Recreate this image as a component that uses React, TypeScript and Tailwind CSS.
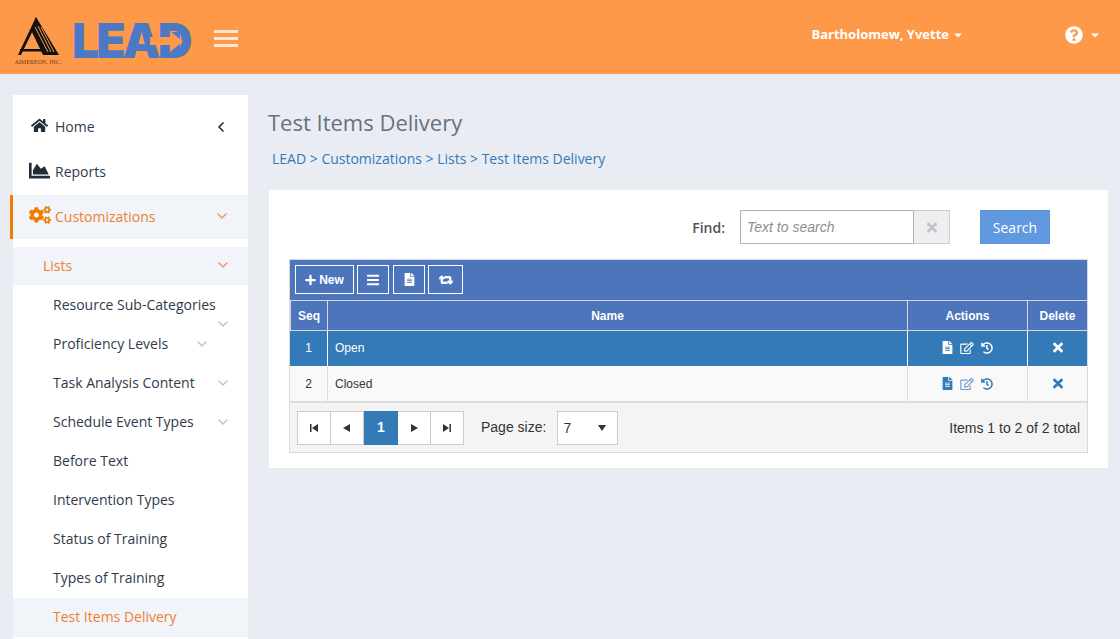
import { FaHome, FaChartArea, FaCogs, FaPlus, FaBars, FaFileAlt, FaRetweet, FaTimes, FaRegEdit, FaHistory, FaQuestionCircle } from "react-icons/fa"
import { ChevronDown, ChevronLeft } from "lucide-react"

const subItems = [
  { label: "Resource Sub-Categories" },
  { label: "Proficiency Levels", chevron: "near" },
  { label: "Task Analysis Content", chevron: "far" },
  { label: "Schedule Event Types", chevron: "far" },
  { label: "Before Text" },
  { label: "Intervention Types" },
  { label: "Status of Training" },
  { label: "Types of Training" },
]

function Tri({ d, w = 8, className = "" }: { d: string; w?: number; className?: string }) {
  return (
    <svg width={w} height="8" viewBox={`0 0 ${w} 8`} className={className}>
      <path d={d} fill="currentColor" />
    </svg>
  )
}

function Logo() {
  return (
    <div className="flex items-start">
      <div className="flex flex-col items-center w-[50px] mt-[16px] ml-[13px]">
        <svg width="46" height="40" viewBox="0 0 46 40">
          <path d="M21 1 L44 39 L28 39 L16 14 Z" fill="#111" />
          <path d="M21 1 L3 39 L6 39 L21 8 Z" fill="#111" />
          <path d="M20 11 L33 36 M23 10 L36 36 M26 11 L39 36" stroke="#ff994a" strokeWidth="1" fill="none" />
          <path d="M5 33 H27 V35.5 H5 Z" fill="#111" />
        </svg>
        <span className="text-[6px] leading-[6px] mt-[3px] text-[#6b3a16] whitespace-nowrap font-['Liberation_Serif',serif]">AIMEREON, INC.</span>
      </div>
      <div className="relative ml-[9px] mt-[17px] h-[48px] w-[122px]">
        <span className="block text-[48px] leading-[48px] font-black tracking-[-3px] text-[#4c78c4] font-['Inter',sans-serif]">LEAD</span>
        <svg className="absolute left-[78px] top-[14px]" width="36" height="22" viewBox="0 0 36 22">
          <path d="M18 1 H30 V20 H18 Z" fill="#4c78c4" />
          <path d="M0 6 H20 V0 L33 10.5 L20 21 V14 H0 Z" fill="#ff994a" />
        </svg>
      </div>
    </div>
  )
}

export default function App() {
  return (
    <div className="h-[639px] w-[1120px] overflow-hidden bg-[#e9ecf3] font-['Open_Sans',sans-serif]">
      {/* Header */}
      <div className="h-[74px] bg-[#ff994a] flex items-start relative">
        <Logo />
        <div className="ml-[20px] mt-[30px] flex flex-col gap-[4px] w-[24px]">
          <div className="h-[3px] bg-[#ffe6d2]" />
          <div className="h-[3px] bg-[#ffe6d2]" />
          <div className="h-[3px] bg-[#ffe6d2]" />
        </div>
        <div className="ml-auto mt-[26px] flex items-center text-white text-[13px] font-bold h-[18px]">
          <span>Bartholomew, Yvette</span>
          <Tri d="M0 2.5 H8 L4 6.5 Z" className="ml-[5px]" />
          <FaQuestionCircle className="ml-[103px] w-[18px] h-[18px]" />
          <Tri d="M0 2.5 H8 L4 6.5 Z" className="ml-[8px] mr-[21px]" />
        </div>
      </div>

      <div className="flex items-start">
        {/* Sidebar */}
        <div className="ml-[13px] mt-[21px] w-[235px] h-[560px] bg-white text-[14px] text-[#2f3b4c] shrink-0">
          <div className="h-[10px]" />
          <div className="h-[45px] pb-[2px] flex items-center relative">
            <FaHome className="ml-[18px] w-[17px] h-[17px] text-[#222d3a] -mt-[3px]" />
            <span className="ml-[7px]">Home</span>
            <ChevronLeft className="ml-auto mr-[19px] w-[16px] h-[16px] text-[#222d3a]" strokeWidth={2.5} />
          </div>
          <div className="h-[45px] pb-[2px] flex items-center">
            <FaChartArea className="ml-[16px] w-[21px] h-[21px] text-[#222d3a] -mt-[3px]" />
            <span className="ml-[5px]">Reports</span>
          </div>
          <div className="h-[44px] pb-[2px] flex items-center bg-[#f1f4f8] relative text-[#f0802f]">
            <div className="absolute -left-[3px] top-0 bottom-0 w-[3px] bg-[#ee7d00]" />
            <FaCogs className="ml-[16px] w-[22px] h-[22px] text-[#ee7d00] -mt-[2px]" />
            <span className="ml-[4px]">Customizations</span>
            <ChevronDown className="ml-auto mr-[18px] w-[16px] h-[16px] text-[#f0906a]" strokeWidth={2} />
          </div>
          <div className="h-[8px]" />
          <div className="h-[38px] pb-[2px] flex items-center bg-[#f1f4f8] text-[#f0802f]">
            <span className="ml-[30px]">Lists</span>
            <ChevronDown className="ml-auto mr-[17px] w-[16px] h-[16px] text-[#f0906a]" strokeWidth={2} />
          </div>
          <div className="h-[1px]" />
          {subItems.map((item) => (
            <div key={item.label} className="h-[39px] pb-[2px] flex items-center relative pl-[40px]">
              <span>{item.label}</span>
              {item.label === "Resource Sub-Categories" && (
                <ChevronDown className="absolute right-[17px] top-[30px] w-[16px] h-[16px] text-[#b8c2d0]" strokeWidth={2} />
              )}
              {item.chevron === "near" && (
                <ChevronDown className="ml-[26px] w-[16px] h-[16px] text-[#b8c2d0]" strokeWidth={2} />
              )}
              {item.chevron === "far" && (
                <ChevronDown className="ml-auto mr-[17px] w-[16px] h-[16px] text-[#b8c2d0]" strokeWidth={2} />
              )}
            </div>
          ))}
          <div className="h-[39px] pb-[2px] flex items-center bg-[#f1f4f8] pl-[40px] text-[#f0802f]">Test Items Delivery</div>
        </div>

        {/* Main */}
        <div className="ml-[21px] w-[839px] shrink-0">
          <h1 className="mt-[33px] -ml-[1px] text-[22px] leading-[30px] text-[#66727e]">Test Items Delivery</h1>
          <div className="mt-[12px] ml-[3px] text-[14px] leading-[20px] text-[#337ab7]">LEAD &gt; Customizations &gt; Lists &gt; Test Items Delivery</div>

          <div className="mt-[21px] bg-white h-[278px] px-[20px] pt-[20px]">
            {/* Find row */}
            <div className="flex items-center h-[34px] pr-[38px] justify-end">
              <span className="text-[14px] font-semibold text-[#4a5460] mr-[15px] pt-[1px]">Find:</span>
              <div className="w-[174px] h-[34px] border border-[#b3b3b3] flex items-center pl-[6px] pt-[1px] italic text-[14px] text-[#8a8f96] font-['Liberation_Sans',sans-serif]">Text to search</div>
              <div className="w-[36px] h-[34px] bg-[#eeeeee] border border-[#cccccc] border-l-0 flex items-center justify-center text-[#bcc3cd]">
                <FaTimes className="w-[10px] h-[15px]" />
              </div>
              <button className="ml-[30px] w-[70px] h-[34px] bg-[#6199e0] border border-[#5a93dc] text-white text-[14px]">Search</button>
            </div>

            {/* Grid */}
            <div className="mt-[15px] border border-[#d9d9d9] font-['Liberation_Sans',sans-serif] text-[12px]">
              <div className="h-[40px] pb-[1px] bg-[#4c75bb] flex items-center pl-[5px]">
                <div className="h-[29px] w-[59px] border border-white text-white font-bold flex items-center justify-center gap-[3px]">
                  <FaPlus className="w-[11px] h-[12px]" />
                  <span>New</span>
                </div>
                <div className="ml-[3px] h-[29px] w-[32px] border border-white text-white flex items-center justify-center">
                  <FaBars className="w-[12px] h-[14px]" />
                </div>
                <div className="ml-[4px] h-[29px] w-[32px] border border-white text-white flex items-center justify-center">
                  <FaFileAlt className="w-[11px] h-[13px]" />
                </div>
                <div className="ml-[3px] h-[29px] w-[35px] border border-white text-white flex items-center justify-center">
                  <FaRetweet className="w-[14px] h-[14px]" stroke="currentColor" strokeWidth={40} />
                </div>
              </div>
              <div className="h-[31px] bg-[#4c75bb] border-y border-[#d9d9d9] grid grid-cols-[38px_580px_120px_59px] text-white font-bold text-center items-stretch">
                <div className="flex items-center justify-center border-x border-[#d9d9d9]">Seq</div>
                <div className="flex items-center justify-center pr-[20px] border-r border-[#d9d9d9]">Name</div>
                <div className="flex items-center justify-center border-r border-[#d9d9d9]">Actions</div>
                <div className="flex items-center justify-center">Delete</div>
              </div>
              <div className="h-[35px] bg-[#337ab7] text-white grid grid-cols-[38px_580px_120px_59px]">
                <div className="flex items-center justify-center pb-[2px] border-r border-white">1</div>
                <div className="flex items-center pl-[7px] pb-[2px] border-r border-white">Open</div>
                <div className="flex items-center justify-center gap-[7px] pb-[2px] border-r border-white">
                  <FaFileAlt className="w-[11px] h-[13px]" />
                  <FaRegEdit className="w-[14px] h-[12px]" />
                  <FaHistory className="w-[12px] h-[12px]" />
                </div>
                <div className="flex items-center justify-center pb-[2px]">
                  <FaTimes className="w-[10px] h-[15px]" />
                </div>
              </div>
              <div className="h-[37px] bg-[#f9f9f9] text-[#333333] grid grid-cols-[38px_580px_120px_59px] border-b-2 border-[#dddddd]">
                <div className="flex items-center justify-center border-r border-[#dddddd]">2</div>
                <div className="flex items-center pl-[7px] border-r border-[#dddddd]">Closed</div>
                <div className="flex items-center justify-center gap-[7px] border-r border-[#dddddd] text-[#337ab7]">
                  <FaFileAlt className="w-[11px] h-[13px]" />
                  <FaRegEdit className="w-[14px] h-[12px] opacity-70" />
                  <FaHistory className="w-[12px] h-[12px]" />
                </div>
                <div className="flex items-center justify-center text-[#337ab7]">
                  <FaTimes className="w-[10px] h-[15px]" />
                </div>
              </div>
              {/* Pager */}
              <div className="h-[49px] bg-[#f4f4f4] flex items-center pl-[7px] pr-[7px] text-[14px] text-[#333333]">
                <div className="flex h-[34px] border border-[#cccccc] bg-white">
                  <div className="w-[33px] flex items-center justify-center border-r border-[#cccccc]"><Tri d="M0 0 H1.5 V8 H0 Z M8 0 V8 L2 4 Z" /></div>
                  <div className="w-[33px] flex items-center justify-center border-r border-[#cccccc]"><Tri d="M7 0 V8 L0 4 Z" /></div>
                  <div className="w-[34px] -my-px flex items-center justify-center bg-[#337ab7] text-white font-bold text-[14px]">1</div>
                  <div className="w-[33px] flex items-center justify-center border-r border-[#cccccc]"><Tri d="M1 0 V8 L8 4 Z" /></div>
                  <div className="w-[32px] flex items-center justify-center"><Tri d="M0 0 V8 L6 4 Z M6.5 0 H8 V8 H6.5 Z" /></div>
                </div>
                <span className="ml-[17px]">Page size:</span>
                <div className="ml-[11px] h-[34px] w-[61px] border border-[#cccccc] bg-white flex items-center pl-[5px] pr-[11px] justify-between">
                  <span className="pt-[1px]">7</span>
                  <Tri d="M0 1 H8 L4 7 Z" />
                </div>
                <span className="ml-auto pt-[1px]">Items 1 to 2 of 2 total</span>
              </div>
            </div>
          </div>
        </div>
      </div>
    </div>
  )
}
